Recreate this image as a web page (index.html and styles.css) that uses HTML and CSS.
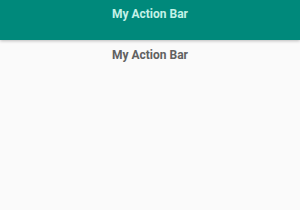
FILE: index.html
```html
<!DOCTYPE html>
<html lang="en">
<head>
    <meta charset="UTF-8">
    <title>My Action Bar</title>
    <link rel="stylesheet" href="styles.css">
</head>
<body>
    <header class="action-bar">
        <span class="action-bar-title">My Action Bar</span>
    </header>
    <main class="content">
        <h1 class="content-title">My Action Bar</h1>
    </main>
</body>
</html>
```

FILE: styles.css
```css
html, body {
    margin: 0;
    padding: 0;
    height: 100%;
}
body {
    font-family: Roboto, "Noto Sans", sans-serif;
    background-color: #fafafa;
}
.action-bar {
    height: 40px;
    background-color: #00897b;
    display: flex;
    justify-content: center;
    padding-top: 7px;
    box-sizing: border-box;
    box-shadow: 0 1px 3px rgba(0, 0, 0, 0.25);
}
.action-bar-title {
    color: #c4f1e7;
    font-size: 12px;
    font-weight: 700;
}
.content {
    display: flex;
    justify-content: center;
}
.content-title {
    margin: 8px 0 0;
    color: #616161;
    font-size: 12px;
    font-weight: 700;
}
```
